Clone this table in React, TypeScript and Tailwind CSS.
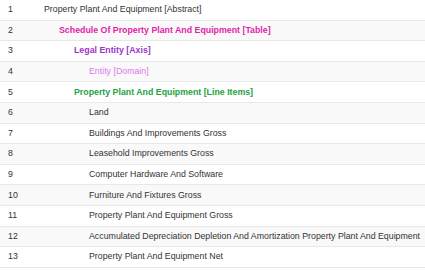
const rows: { n: number; label: string; indent: number; cls: string }[] = [
  { n: 1, label: "Property Plant And Equipment [Abstract]", indent: 0, cls: "text-[#333333]" },
  { n: 2, label: "Schedule Of Property Plant And Equipment [Table]", indent: 1, cls: "font-bold text-[#e01fa8]" },
  { n: 3, label: "Legal Entity [Axis]", indent: 2, cls: "font-bold text-[#9b35c9]" },
  { n: 4, label: "Entity [Domain]", indent: 3, cls: "text-[#d97be8]" },
  { n: 5, label: "Property Plant And Equipment [Line Items]", indent: 2, cls: "font-bold text-[#23a23f]" },
  { n: 6, label: "Land", indent: 3, cls: "text-[#333333]" },
  { n: 7, label: "Buildings And Improvements Gross", indent: 3, cls: "text-[#333333]" },
  { n: 8, label: "Leasehold Improvements Gross", indent: 3, cls: "text-[#333333]" },
  { n: 9, label: "Computer Hardware And Software", indent: 3, cls: "text-[#333333]" },
  { n: 10, label: "Furniture And Fixtures Gross", indent: 3, cls: "text-[#333333]" },
  { n: 11, label: "Property Plant And Equipment Gross", indent: 3, cls: "text-[#333333]" },
  { n: 12, label: "Accumulated Depreciation Depletion And Amortization Property Plant And Equipment", indent: 3, cls: "text-[#333333]" },
  { n: 13, label: "Property Plant And Equipment Net", indent: 3, cls: "text-[#333333]" },
];

const indents = ["pl-0", "pl-[15px]", "pl-[30px]", "pl-[45px]"];

export default function App() {
  return (
    <div className="w-[425px] h-[270px] overflow-hidden bg-white text-[8.8px] text-[#333333] font-['Liberation_Sans',Arial,sans-serif]">
      {rows.map((r) => (
        <div
          key={r.n}
          className={`flex items-center h-[20.6px] border-b border-[#e8e8e8] whitespace-nowrap ${r.n % 2 === 0 ? "bg-[#f9f9f9]" : "bg-white"}`}
        >
          <div className="w-[44px] shrink-0 pl-[8px]">{r.n}</div>
          <div className={`${indents[r.indent]} ${r.cls}`}>{r.label}</div>
        </div>
      ))}
    </div>
  );
}
